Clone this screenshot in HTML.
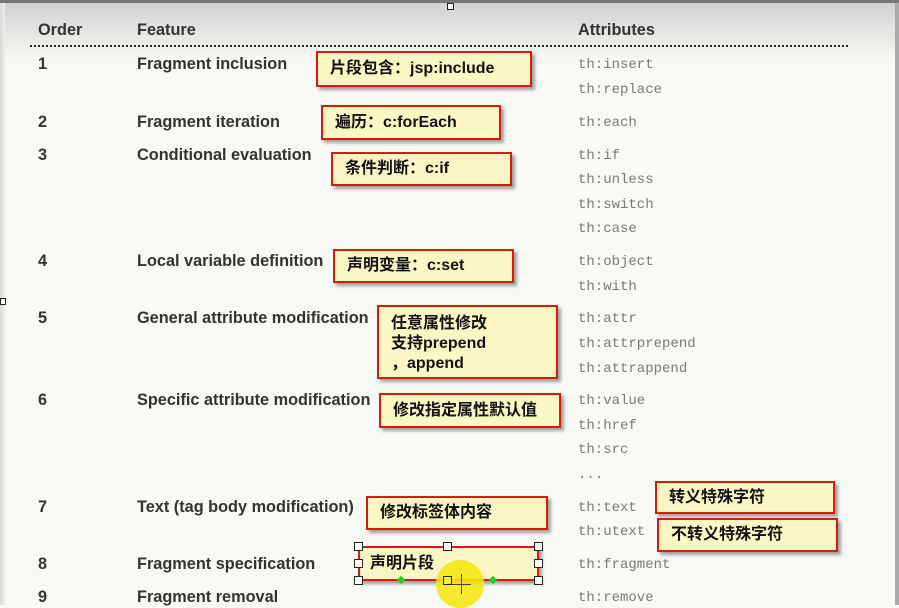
<!DOCTYPE html>
<html><head><meta charset="utf-8"><style>
body{margin:0;width:899px;height:605px;overflow:hidden;position:relative;background:#f7f9f5;font-family:"Liberation Sans","Noto Sans CJK SC",sans-serif}
.top{position:absolute;left:0;top:0;width:899px;height:60px;background:linear-gradient(#cfd0ce,#f7f9f5)}
.tb{position:absolute;left:0;top:0;width:899px;height:3px;background:#777}
.lb{position:absolute;left:0;top:3px;width:5px;height:602px;background:linear-gradient(90deg,#d8d8d6,#eef0ec)}
.rb{position:absolute;left:895px;top:3px;width:4px;height:602px;background:#aaa}
.t{position:absolute;font-weight:bold;font-size:16.3px;color:#333;line-height:18px}
.a{position:absolute;font-family:"Liberation Mono",monospace;font-size:14px;color:#7a7a7a;line-height:18px;left:578px}
.hl{position:absolute;left:30px;top:45px;width:818px;border-top:2px dotted #222}
.b{position:absolute;background:#fbf7c4;border:2px solid #d81b0c;box-shadow:3px 3px 3px rgba(0,0,0,.35);font-family:"Liberation Sans","Noto Sans CJK SC",sans-serif;font-weight:bold;font-size:16px;color:#111;box-sizing:border-box;padding-left:12px;display:flex;align-items:center;line-height:20px}
.h{position:absolute;width:7px;height:7px;background:#fff;border:1px solid #222}
.g{position:absolute;width:6px;height:6px;background:#2c2;transform:rotate(45deg)}
</style></head><body>
<div class="top"></div><div class="tb"></div><div class="lb"></div><div class="rb"></div>
<div class="t" style="left:38px;top:21px">Order</div>
<div class="t" style="left:137px;top:21px">Feature</div>
<div class="t" style="left:578px;top:21px">Attributes</div>
<div class="hl"></div>

<div class="t" style="left:38px;top:55px">1</div><div class="t" style="left:137px;top:55px">Fragment inclusion</div>
<div class="a" style="top:56px">th:insert</div><div class="a" style="top:81px">th:replace</div>
<div class="t" style="left:38px;top:113px">2</div><div class="t" style="left:137px;top:113px">Fragment iteration</div>
<div class="a" style="top:114px">th:each</div>
<div class="t" style="left:38px;top:146px">3</div><div class="t" style="left:137px;top:146px">Conditional evaluation</div>
<div class="a" style="top:147px">th:if</div><div class="a" style="top:171px">th:unless</div><div class="a" style="top:196px">th:switch</div><div class="a" style="top:220px">th:case</div>
<div class="t" style="left:38px;top:252px">4</div><div class="t" style="left:137px;top:252px">Local variable definition</div>
<div class="a" style="top:253px">th:object</div><div class="a" style="top:278px">th:with</div>
<div class="t" style="left:38px;top:309px">5</div><div class="t" style="left:137px;top:309px">General attribute modification</div>
<div class="a" style="top:310px">th:attr</div><div class="a" style="top:335px">th:attrprepend</div><div class="a" style="top:360px">th:attrappend</div>
<div class="t" style="left:38px;top:391px">6</div><div class="t" style="left:137px;top:391px">Specific attribute modification</div>
<div class="a" style="top:392px">th:value</div><div class="a" style="top:417px">th:href</div><div class="a" style="top:441px">th:src</div><div class="a" style="top:466px">...</div>
<div class="t" style="left:38px;top:498px">7</div><div class="t" style="left:137px;top:498px">Text (tag body modification)</div>
<div class="a" style="top:499px">th:text</div><div class="a" style="top:523px">th:utext</div>
<div class="t" style="left:38px;top:555px">8</div><div class="t" style="left:137px;top:555px">Fragment specification</div>
<div class="a" style="top:556px">th:fragment</div>
<div class="t" style="left:38px;top:588px">9</div><div class="t" style="left:137px;top:588px">Fragment removal</div>
<div class="a" style="top:589px">th:remove</div>

<div class="b" style="left:316px;top:51px;width:216px;height:36px">片段包含：jsp:include</div>
<div class="b" style="left:321px;top:105px;width:180px;height:35px">遍历：c:forEach</div>
<div class="b" style="left:331px;top:152px;width:181px;height:34px">条件判断：c:if</div>
<div class="b" style="left:333px;top:249px;width:181px;height:34px">声明变量：c:set</div>
<div class="b" style="left:377px;top:305px;width:181px;height:74px;align-items:flex-start;padding-top:7px">任意属性修改<br>支持prepend<br>，append</div>
<div class="b" style="left:379px;top:393px;width:182px;height:35px">修改指定属性默认值</div>
<div class="b" style="left:366px;top:496px;width:182px;height:34px">修改标签体内容</div>
<div class="b" style="left:655px;top:481px;width:180px;height:33px">转义特殊字符</div>
<div class="b" style="left:657px;top:518px;width:181px;height:34px">不转义特殊字符</div>
<div class="b" style="left:358px;top:546px;width:181px;height:35px;padding-left:10px">声明片段</div>
<div style="position:absolute;left:436px;top:560px;width:48px;height:48px;border-radius:50%;background:rgba(245,230,20,.9)"></div>
<div style="position:absolute;left:461px;top:574px;width:1px;height:20px;background:#444"></div>
<div style="position:absolute;left:451px;top:584px;width:20px;height:1px;background:#444"></div>
<div class="h" style="left:354px;top:542px"></div><div class="h" style="left:443px;top:542px"></div><div class="h" style="left:534px;top:542px"></div>
<div class="h" style="left:354px;top:559px"></div><div class="h" style="left:534px;top:559px"></div>
<div class="h" style="left:354px;top:576px"></div><div class="h" style="left:443px;top:576px;background:#ee3"></div><div class="h" style="left:534px;top:576px"></div>
<div class="g" style="left:398px;top:577px"></div><div class="g" style="left:490px;top:577px"></div>
<div class="h" style="left:447px;top:3px;width:5px;height:5px"></div>
<div class="h" style="left:0px;top:298px;width:4px;height:5px"></div>
</body></html>
